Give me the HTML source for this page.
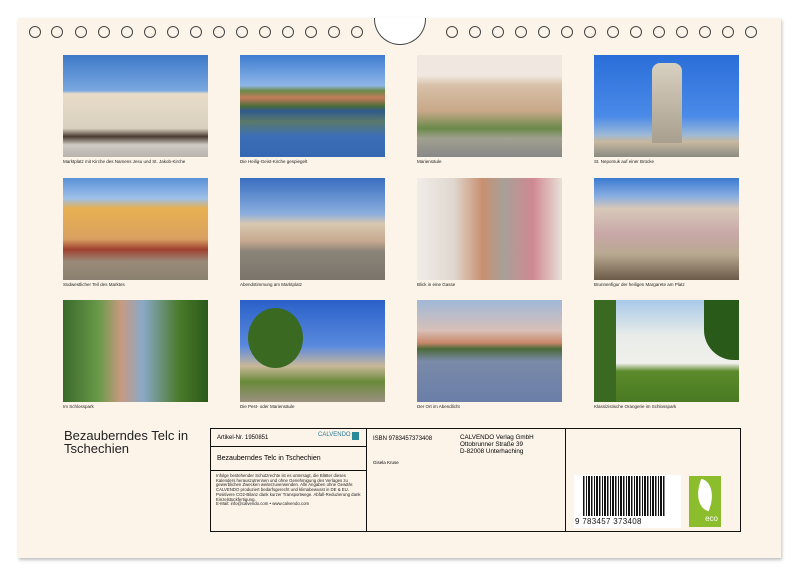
<!DOCTYPE html><html><head><meta charset="utf-8"><style>
*{margin:0;padding:0;box-sizing:border-box}
body{width:800px;height:577px;background:#fff;position:relative;overflow:hidden;font-family:"Liberation Sans",sans-serif}
.page{position:absolute;left:18px;top:18px;width:763px;height:540px;background:#fcf4e9;box-shadow:1px 2px 3px rgba(0,0,0,.25)}
.ring{position:absolute;top:26px;width:12px;height:12px;border:1.3px solid #444;border-radius:50%}
.notch{position:absolute;left:374px;top:18px;width:52px;height:27px;border:1.3px solid #444;border-top:none;border-radius:0 0 26px 26px;background:#fff}
.ph{position:absolute;width:145px;height:102px;overflow:hidden}
.cap{position:absolute;font-size:4.5px;color:#222;white-space:nowrap}
</style></head><body>
<div class="page"></div>
<div class="notch"></div>
<div id="rings"></div>
<script>
var h='';[29,51,75,98,121,144,167,190,213,236,259,282,305,328,351,446,469,492,515,538,561,584,607,630,653,676,699,722,745].forEach(function(x){h+='<div class="ring" style="left:'+x+'px"></div>'});document.getElementById('rings').innerHTML=h;
</script>
<div class="ph" style="left:63px;top:55px;background:linear-gradient(#3d78c8 0%,#7aa8e0 35%,#e8dcc8 38%,#d9d0c0 72%,#4a3a30 80%,#cfcac2 88%,#b8b4ae 100%)"></div>
<div class="ph" style="left:240px;top:55px;background:linear-gradient(#3f7dd0 0%,#8fb6e8 30%,#6b8a4a 35%,#c47a5a 42%,#4d6d3a 50%,#2e5a8c 55%,#5a7a6a 65%,#3c6eb8 80%,#3468b0 100%)"></div>
<div class="ph" style="left:417px;top:55px;background:linear-gradient(#f0e8e0 0%,#f0e8e0 20%,#d8c0a8 30%,#c8a888 55%,#6a8a4a 72%,#a0a090 82%,#888 100%)"></div>
<div class="ph" style="left:594px;top:55px;background:linear-gradient(#2a6ed8 0%,#4a8ae8 60%,#9ab8d8 78%,#c8b8a0 85%,#8a8a80 100%)"><div style="position:absolute;left:58px;top:8px;width:30px;height:80px;background:linear-gradient(#d8d0c0,#a89f8e);border-radius:8px 8px 0 0"></div></div>
<div class="ph" style="left:63px;top:178px;background:linear-gradient(#5a92d8 0%,#9ec0e8 20%,#e8b050 30%,#d8a060 60%,#a04030 70%,#9a8a78 82%,#8a8070 100%)"></div>
<div class="ph" style="left:240px;top:178px;background:linear-gradient(#3a6ec0 0%,#8aaede 35%,#d8c8b0 45%,#c8a890 62%,#8a8478 72%,#7a746c 100%)"></div>
<div class="ph" style="left:417px;top:178px;background:linear-gradient(90deg,#f0ece8 0%,#e0d8d0 25%,#c89070 45%,#a8a098 60%,#d08890 80%,#e8e0d8 100%)"></div>
<div class="ph" style="left:594px;top:178px;background:linear-gradient(#3a7ad0 0%,#8aaee0 18%,#d8c8b8 30%,#c8a8a8 55%,#b8a890 75%,#6a5a48 100%)"></div>
<div class="ph" style="left:63px;top:300px;background:linear-gradient(90deg,#3a6a2a 0%,#6a9a4a 25%,#c89a80 40%,#8aa8c8 55%,#4a7a2a 80%,#2a5a1a 100%)"></div>
<div class="ph" style="left:240px;top:300px;background:linear-gradient(#2a60c8 0%,#5a8ade 45%,#c8b898 65%,#6a8a3a 80%,#9a9080 100%)"><div style="position:absolute;left:8px;top:8px;width:55px;height:60px;background:#3a6a22;border-radius:50%"></div></div>
<div class="ph" style="left:417px;top:300px;background:linear-gradient(#a0b8d8 0%,#d8c0b8 30%,#c88868 42%,#4a6a3a 48%,#7a8aa8 60%,#6a7ea8 100%)"></div>
<div class="ph" style="left:594px;top:300px;background:linear-gradient(#a8c8e8 0%,#e8ece8 35%,#f0f0ec 62%,#5a8a2a 70%,#4a7a22 100%)"><div style="position:absolute;left:0;top:0;width:22px;height:102px;background:#3a6a22"></div><div style="position:absolute;right:0;top:0;width:35px;height:60px;background:#2a5a1a;border-radius:0 0 0 30px"></div></div>
<div class="cap" style="left:63px;top:159px">Marktplatz mit Kirche des Namens Jesu und St. Jakob-Kirche</div>
<div class="cap" style="left:240px;top:159px">Die Heilig-Geist-Kirche gespiegelt</div>
<div class="cap" style="left:417px;top:159px">Mariensäule</div>
<div class="cap" style="left:594px;top:159px">St. Nepomuk auf einer Brücke</div>
<div class="cap" style="left:63px;top:282px">Südwestlicher Teil des Marktes</div>
<div class="cap" style="left:240px;top:282px">Abendstimmung am Marktplatz</div>
<div class="cap" style="left:417px;top:282px">Blick in eine Gasse</div>
<div class="cap" style="left:594px;top:282px">Brunnenfigur der heiligen Margarete am Platz</div>
<div class="cap" style="left:63px;top:404px">Im Schlosspark</div>
<div class="cap" style="left:240px;top:404px">Die Pest- oder Mariensäule</div>
<div class="cap" style="left:417px;top:404px">Der Ort im Abendlicht</div>
<div class="cap" style="left:594px;top:404px">Klassizistische Orangerie im Schlosspark</div>
<div style="position:absolute;left:64px;top:429px;font-size:13px;line-height:13px;color:#222">Bezauberndes Telc in<br>Tschechien</div>
<div style="position:absolute;left:210px;top:428px;width:531px;height:104px;border:1.3px solid #111"></div>
<div style="position:absolute;left:366px;top:428px;width:1.3px;height:104px;background:#111"></div>
<div style="position:absolute;left:565px;top:428px;width:1.3px;height:104px;background:#111"></div>
<div style="position:absolute;left:210px;top:446px;width:156px;height:1.3px;background:#111"></div>
<div style="position:absolute;left:210px;top:470px;width:156px;height:1.3px;background:#111"></div>
<div style="position:absolute;left:217px;top:435px;font-size:6px">Artikel-Nr. 1950851</div>
<div style="position:absolute;left:318px;top:432px;font-size:6px;color:#2a7a9a">CALVENDO</div>
<div style="position:absolute;left:352px;top:432px;width:7px;height:8px;background:#2a8a9a"></div>
<div style="position:absolute;left:217px;top:455px;font-size:7px">Bezauberndes Telc in Tschechien</div>
<div style="position:absolute;left:216px;top:474px;font-size:4.3px;line-height:4.7px;width:150px;color:#222">Infolge bestehender Schutzrechte ist es untersagt, die Blätter dieses Kalenders herauszutrennen und ohne Genehmigung des Verlages zu gewerblichen Zwecken weiterzuverwenden. Alle Angaben ohne Gewähr.<br>CALVENDO produziert bedarfsgerecht und klimabewusst in DE &amp; EU. Positivere CO2-Bilanz dank kurzer Transportwege. Abfall-Reduzierung dank Einzelstückfertigung.<br>E-Mail: info@calvendo.com • www.calvendo.com</div>
<div style="position:absolute;left:373px;top:436px;font-size:6px">ISBN 9783457373408</div>
<div style="position:absolute;left:373px;top:460px;font-size:4.5px">Gisela Kruse</div>
<div style="position:absolute;left:460px;top:434px;font-size:6.3px;line-height:7px">CALVENDO Verlag GmbH<br>Ottobrunner Straße 39<br>D-82008 Unterhaching</div>
<div style="position:absolute;left:574px;top:475px;width:107px;height:53px;background:#fff"></div>
<div style="position:absolute;left:583px;top:476px;width:83px;height:40px;background:repeating-linear-gradient(90deg,#111 0 1.5px,#fff 1.5px 3px,#111 3px 3.8px,#fff 3.8px 5px,#111 5px 7px,#fff 7px 8px)"></div>
<div style="position:absolute;left:575px;top:517px;font-size:8px;letter-spacing:.3px;color:#111">9 783457 373408</div>
<div style="position:absolute;left:689px;top:476px;width:32px;height:51px;background:#8cbd2c;color:#fff;font-size:8px;text-align:right;padding-right:3px;padding-top:38px">eco</div>
<div style="position:absolute;left:696px;top:481px;width:18px;height:28px;background:#fff;border-radius:0 90% 0 90%;transform:rotate(20deg)"></div>
</body></html>
